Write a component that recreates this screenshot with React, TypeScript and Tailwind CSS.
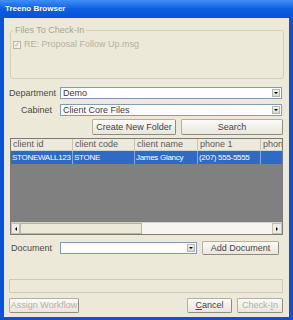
import React from 'react';

const font = { fontFamily: '"Liberation Sans", Arial, sans-serif' };

const ComboBox: React.FC<{ value?: string; className?: string }> = ({ value, className }) => (
    <div className={`h-[12px] bg-white border border-[#7f9db9] flex items-center ${className ?? ''}`}>
        <span className="flex-1 pl-[2px] text-[9px] leading-none text-[#3a3a3a] truncate">{value}</span>
        <div className="w-[8px] h-[8px] mr-[1px] bg-gradient-to-b from-[#f4f4f0] to-[#d8d6cc] border border-[#b8b6aa] flex items-center justify-center">
            <div className="w-0 h-0 border-l-[2px] border-r-[2px] border-t-[2px] border-l-transparent border-r-transparent border-t-black" />
        </div>
    </div>
);

const Button: React.FC<{ children: React.ReactNode; disabled?: boolean; className?: string }> = ({ children, disabled, className }) => (
    <button
        className={`flex items-center justify-center rounded-[2px] border border-[#b3b09f] border-b-[#8f8c7d] border-r-[#8f8c7d] bg-gradient-to-b from-[#fbfbf8] to-[#e8e6dc] text-[9px] leading-none ${disabled ? 'text-[#b4b19f]' : 'text-[#444]'} ${className ?? ''}`}
    >
        {children}
    </button>
);

const columns = [
    { title: 'client id', value: 'STONEWALL123', w: 'w-[62px]' },
    { title: 'client code', value: 'STONE', w: 'w-[62px]' },
    { title: 'client name', value: 'James Glancy', w: 'w-[63px]' },
    { title: 'phone 1', value: '(207) 555-5555', w: 'w-[63px]' },
    { title: 'phone 2', value: '', w: 'w-[60px]' },
];

export default function App() {
    return (
        <div className="w-[293px] h-[320px] flex flex-col bg-[#0a52dc] overflow-hidden" style={font}>
            {/* title bar */}
            <div className="h-[18px] shrink-0 flex items-center px-[5px] bg-gradient-to-b from-[#3e8ff7] via-[#0b5ee2] to-[#0852d6]">
                <span className="text-white font-bold text-[8px] leading-none">Treeno Browser</span>
            </div>

            {/* body */}
            <div className="flex-1 mx-[4px] mb-[3px] bg-[#ece9d8] flex flex-col px-[5px] pt-[7px]">
                <fieldset className="h-[54px] ml-[1px] border border-[#d0d0bf] rounded-[3px] px-[2px]">
                    <legend className="px-[2px] text-[9px] leading-[11px] text-[#a7a594]">Files To Check-In</legend>
                    <div className="flex items-center gap-[3px] mt-[4px]">
                        <div className="w-[8px] h-[8px] border border-[#b9b7a9] bg-[#f0efe6] flex items-center justify-center text-[7px] leading-none text-[#b0ae9e]">✓</div>
                        <span className="text-[9px] leading-none text-[#b4b2a2]">RE: Proposal Follow Up.msg</span>
                    </div>
                </fieldset>

                <div className="flex items-center mt-[8px]">
                    <span className="w-[43px] text-right text-[9px] leading-none text-[#4a4a4a]">Department</span>
                    <ComboBox value="Demo" className="ml-[8px] flex-1 mr-[2px]" />
                </div>
                <div className="flex items-center mt-[5px]">
                    <span className="w-[43px] text-right text-[9px] leading-none text-[#4a4a4a]">Cabinet</span>
                    <ComboBox value="Client Core Files" className="ml-[8px] flex-1 mr-[2px]" />
                </div>

                <div className="flex mt-[3px] h-[16px] pl-[83px] gap-[5px]">
                    <Button className="w-[84px]">Create New Folder</Button>
                    <Button className="flex-1 mr-[1px]">Search</Button>
                </div>

                {/* grid */}
                <div className="mt-[3px] h-[97px] ml-[1px] mr-[1px] border border-[#7a7a7a] flex flex-col bg-[#808080]">
                    <div className="h-[12px] flex bg-[#ebeadb] border-b border-[#d6d2c2] overflow-hidden">
                        {columns.map(c => (
                            <div key={c.title} className={`${c.w} shrink-0 border-r border-[#c7c5b2] flex items-center pl-[2px] text-[9px] leading-none text-[#5a5a5a] whitespace-nowrap overflow-hidden`}>
                                {c.title}
                            </div>
                        ))}
                    </div>
                    <div className="h-[13px] flex bg-[#316ac5] overflow-hidden">
                        {columns.map(c => (
                            <div key={c.title} className={`${c.w} shrink-0 border-r border-[#8aa6dc] flex items-center pl-[1px] text-[8px] tracking-[-0.3px] leading-none text-white whitespace-nowrap overflow-hidden`}>
                                {c.value}
                            </div>
                        ))}
                    </div>
                    <div className="flex-1" />
                    <div className="h-[12px] flex bg-[#f6f5ef] border-t border-[#d4d0c4]">
                        <div className="w-[9px] border border-[#c3c0b0] bg-[#eeede5] flex items-center justify-center">
                            <div className="w-0 h-0 border-t-[2px] border-b-[2px] border-r-[2px] border-t-transparent border-b-transparent border-r-black" />
                        </div>
                        <div className="w-[122px] border border-[#b7b4a2] bg-[#ece9d8]" />
                        <div className="flex-1" />
                        <div className="w-[10px] border border-[#c3c0b0] bg-[#eeede5] flex items-center justify-center">
                            <div className="w-0 h-0 border-t-[2px] border-b-[2px] border-l-[2px] border-t-transparent border-b-transparent border-l-black" />
                        </div>
                    </div>
                </div>

                <div className="flex items-center mt-[6px] h-[14px]">
                    <span className="w-[43px] text-right text-[9px] leading-none text-[#4a4a4a]">Document</span>
                    <ComboBox className="ml-[8px] w-[137px]" />
                    <Button className="ml-[5px] w-[77px] h-[14px]">Add Document</Button>
                </div>

                <div className="mt-[24px] h-[14px] border border-[#cdcab9] mr-[1px]" />

                <div className="flex mt-[5px] h-[15px] mr-[1px]">
                    <Button disabled className="w-[70px]">Assign Workflow</Button>
                    <div className="flex-1" />
                    <Button className="w-[45px]"><span><span className="underline">C</span>ancel</span></Button>
                    <Button disabled className="w-[46px] ml-[5px]">Check-<span className="underline">I</span>n</Button>
                </div>
            </div>
        </div>
    );
}
